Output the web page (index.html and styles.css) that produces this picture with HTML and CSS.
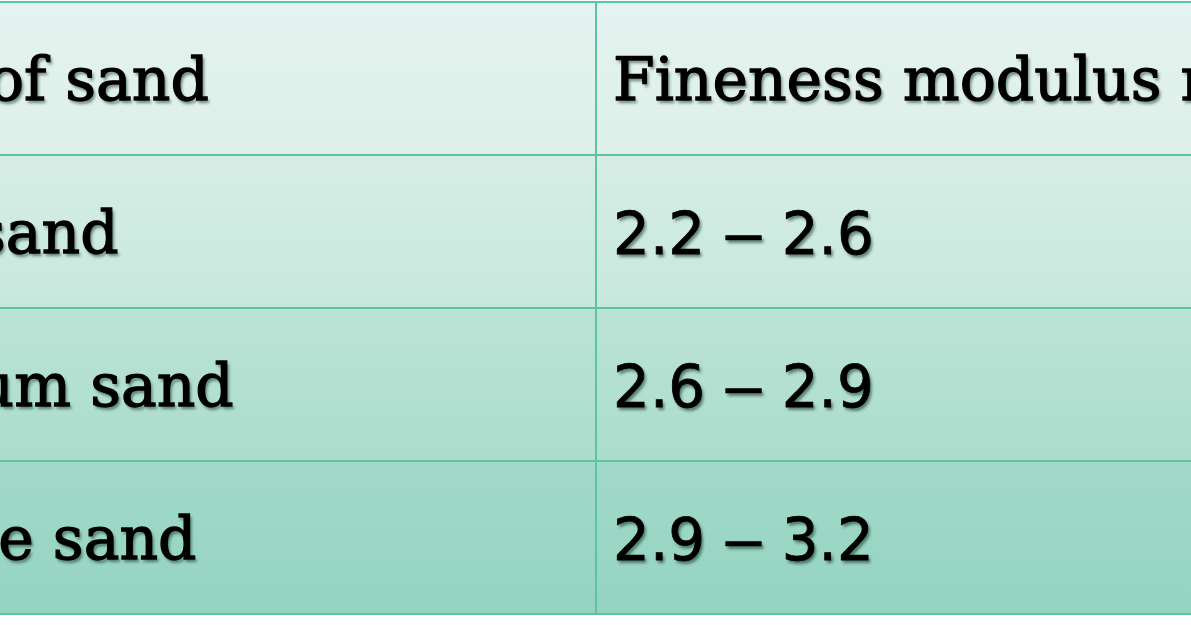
FILE: index.html
```html
<!DOCTYPE html>
<html>
<head>
<meta charset="utf-8">
<link rel="stylesheet" href="styles.css">
</head>
<body>
<div class="viewport">
  <table class="sand-table">
    <colgroup><col class="col-type"><col class="col-fm"></colgroup>
    <tr class="r1"><td>Type of sand</td><td>Fineness modulus range</td></tr>
    <tr class="r2"><td>Fine sand</td><td><span class="num">2.2 <span class="dash">–</span> 2.6</span></td></tr>
    <tr class="r3"><td>Medium sand</td><td><span class="num">2.6 <span class="dash">–</span> 2.9</span></td></tr>
    <tr class="r4"><td>Coarse sand</td><td><span class="num">2.9 <span class="dash">–</span> 3.2</span></td></tr>
  </table>
</div>
</body>
</html>
```

FILE: styles.css
```css
html, body {
  margin: 0;
  padding: 0;
  background: #ffffff;
}
.viewport {
  width: 1191px;
  height: 625px;
  overflow: hidden;
  padding-top: 1px;
  box-sizing: border-box;
}
.sand-table {
  margin-left: -197px;
  border-collapse: collapse;
  table-layout: fixed;
  width: 1600px;
  font-family: "DejaVu Serif", serif;
  font-size: 60px;
  color: #000;
}
.col-type { width: 792px; }
.col-fm { width: 808px; }
.sand-table td {
  border: 2px solid #5cc3a5;
  height: 153px;
  padding: 0 0 0 16px;
  vertical-align: middle;
  white-space: nowrap;
  line-height: 1;
  -webkit-text-stroke: 1.3px #000;
  text-shadow: 2px 3px 3px rgba(10, 45, 35, 0.55);
  box-sizing: border-box;
}
.r1 td { background: linear-gradient(#e4f3ef, #deefea); }
.r2 td { background: linear-gradient(#d6ede6, #c7e8dd); }
.r3 td { background: linear-gradient(#bbe3d6, #abddcd); }
.r4 td { background: linear-gradient(#a2d9c8, #95d4c1); }
.num {
  font-family: "DejaVu Sans", sans-serif;
  font-size: 58px;
  -webkit-text-stroke: 0.8px #000;
}
.dash {
  font-family: "Liberation Sans", sans-serif;
  font-size: 64px;
  margin: 0 2px;
  -webkit-text-stroke: 0.6px #000;
}
```
